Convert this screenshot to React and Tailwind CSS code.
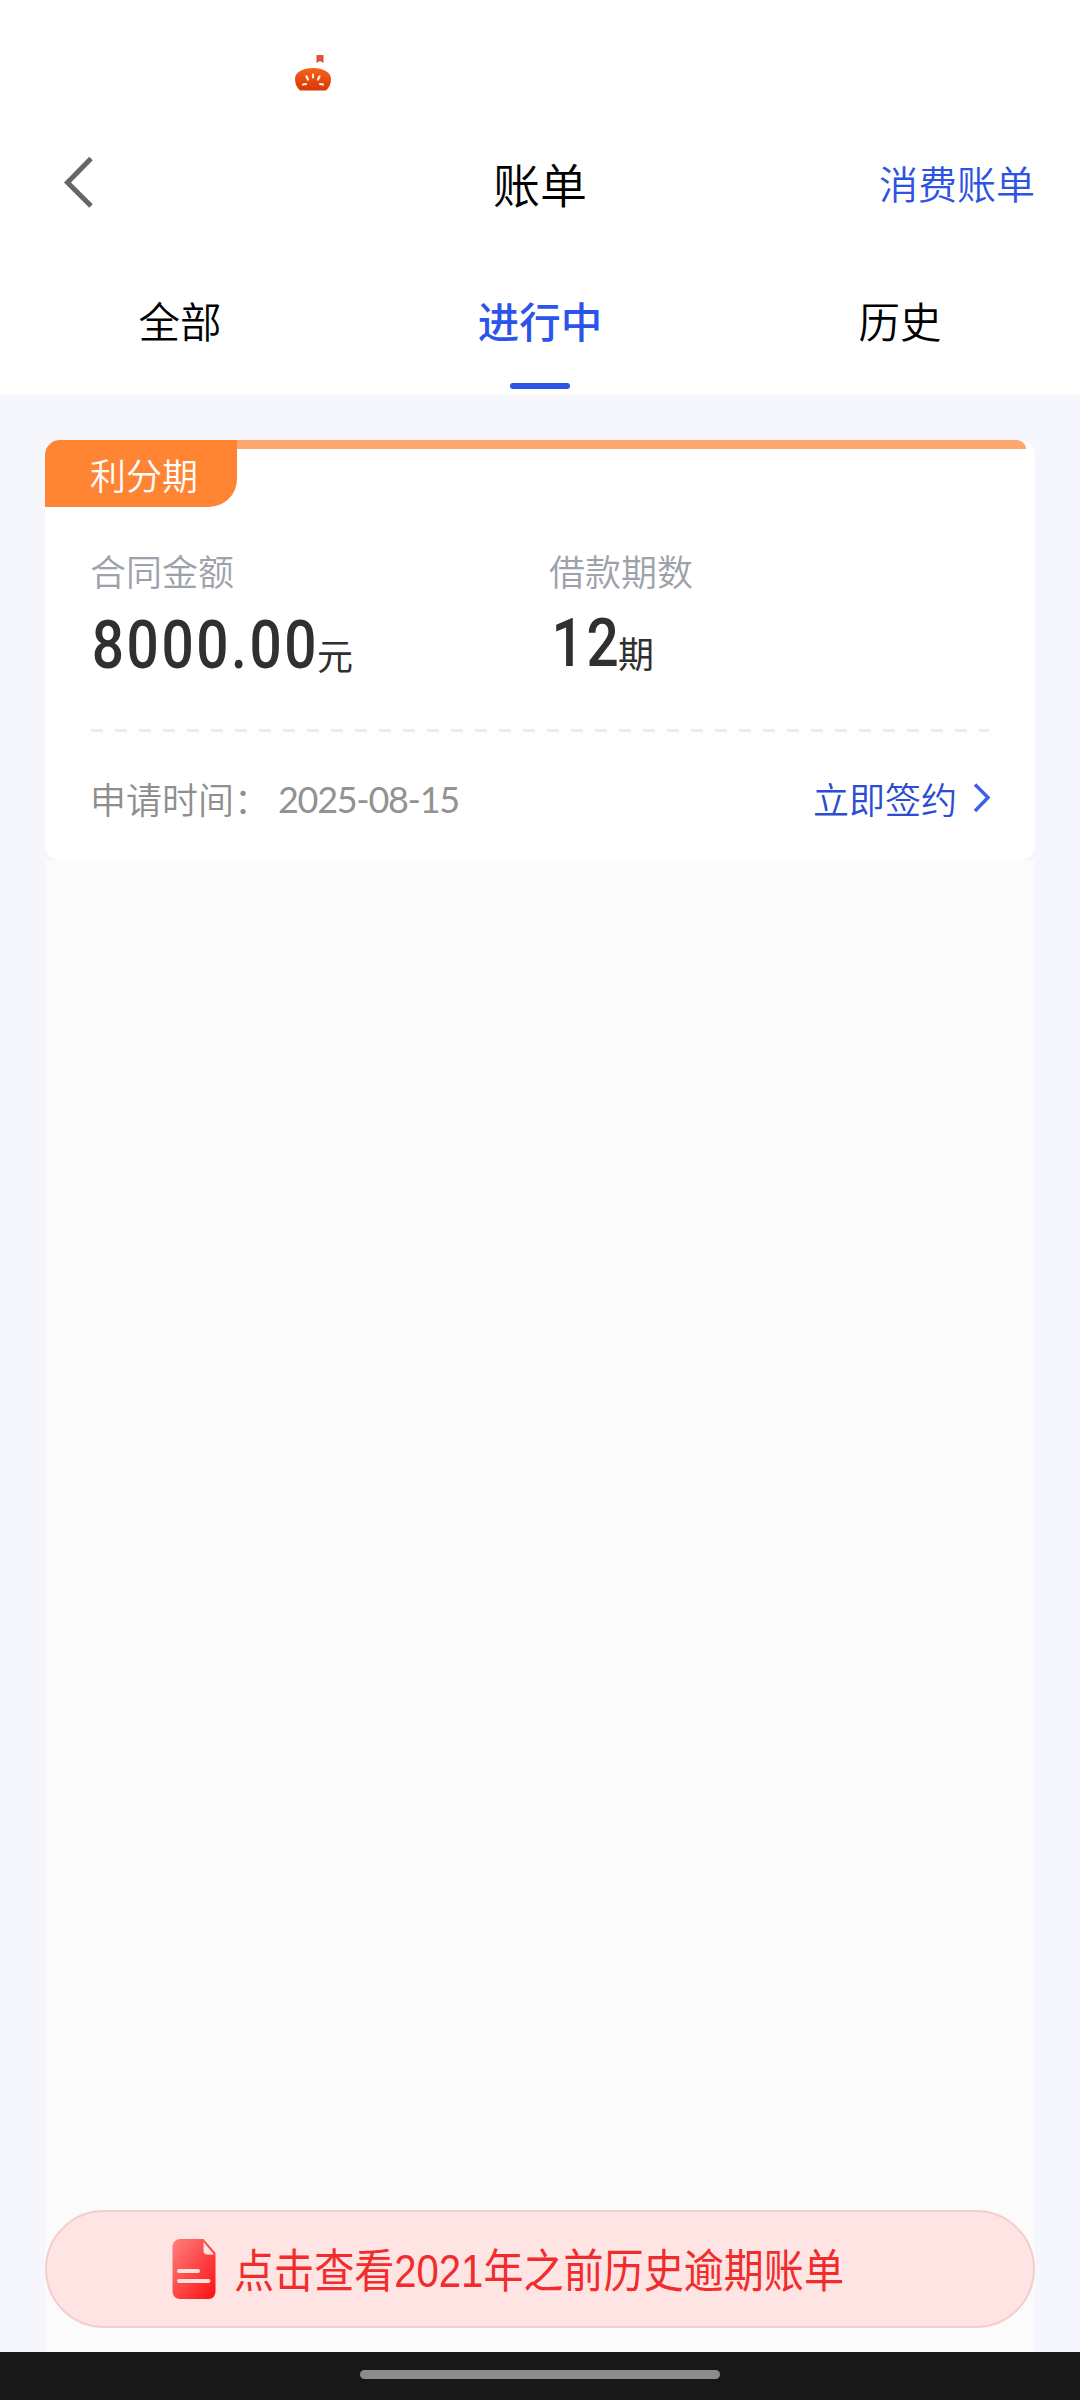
const tabs = [
  { key: "all", label: "全部" },
  { key: "doing", label: "进行中" },
  { key: "history", label: "历史" },
];

const bill = {
  tag: "利分期",
  amount: "8000.00",
  periods: "12",
  date: "2025-08-15",
};

function StatusIcon() {
  return (
    <svg width="38" height="38" viewBox="0 0 38 38">
      <defs>
        <linearGradient id="pumpkin" x1="0" y1="0" x2="0" y2="1">
          <stop offset="0" stopColor="#f2641c" />
          <stop offset="1" stopColor="#dc3606" />
        </linearGradient>
      </defs>
      <path d="M22.500 0h7v8l-3.500-2-3.500 2z" fill="#df5233" />
      <path
        d="M1 24c0-7 8-11 18-11s18 4 18 11c0 5-2 9-5 11.500H6C3 33 1 29 1 24z"
        fill="url(#pumpkin)"
      />
      <g stroke="#fff3dc" strokeWidth="2.200" strokeLinecap="round">
        <path d="M19 19.500v3M12.500 21.500l1.500 3M25.500 21.500l-1.500 3M9 29.500l3-.5M29 29.500l-3-.5" />
      </g>
    </svg>
  );
}

function BillIcon() {
  return (
    <svg width="44" height="62" viewBox="0 0 44 62">
      <defs>
        <linearGradient id="doc" x1="0" y1="0" x2="1" y2="1">
          <stop offset="0" stopColor="#ff7f7f" />
          <stop offset="1" stopColor="#fb1010" />
        </linearGradient>
      </defs>
      <path
        d="M8 1h23.500L43.500 15v38c0 5-3 8-7 8H8c-4 0-7.500-3-7.500-8V9c0-5 3.500-8 7.500-8z"
        fill="url(#doc)"
      />
      <path d="M31.500 4v8.500c0 2.500 1.500 4 4 4h6.500z" fill="#ffe4e4" />
      <path
        d="M7 33h19M7 43h29.500"
        stroke="#ffe0e0"
        strokeWidth="4"
        strokeLinecap="round"
      />
    </svg>
  );
}

function Header() {
  return (
    <div className="h-[130px] flex items-start pt-[55px] pl-[294px]">
      <StatusIcon />
    </div>
  );
}

function NavBar() {
  return (
    <div className="h-[103px] mb-[5px] grid grid-cols-3 items-center pl-[64px] pr-[45px]">
      <svg
        width="30"
        height="54"
        viewBox="0 0 30 54"
        fill="none"
        stroke="#666"
        strokeWidth="5"
      >
        <path d="M27 3.500 3.500 27.500 27 51" />
      </svg>
      <h1 className="pt-[2px] text-[47px] leading-[60px] text-center -ml-[19px] text-black font-[350]">
        账单
      </h1>
      <a className="pt-px text-[39px] leading-[60px] text-right text-[#2d53e2] font-[350]">
        消费账单
      </a>
    </div>
  );
}

function Tabs({ active }) {
  return (
    <div className="h-[157px] grid grid-cols-3">
      {tabs.map((tab) => (
        <div key={tab.key} className="flex flex-col items-center pt-[52px]">
          <span
            className={
              tab.key === active
                ? "text-[41.5px] leading-[60px] font-medium text-[#2b54ea]"
                : "text-[41.5px] leading-[60px] font-[350] text-black"
            }
          >
            {tab.label}
          </span>
          {tab.key === active && (
            <span className="mt-[33px] w-[60px] h-[6px] rounded-full bg-[#2b54ea]" />
          )}
        </div>
      ))}
    </div>
  );
}

function BillCard() {
  return (
    <div className="h-[420px] bg-white rounded-[15px]">
      {/* tag + top strip */}
      <div className="flex items-start pr-[9px]">
        <div className="w-[192px] h-[67px] pl-[45px] bg-[#ff8434] rounded-tl-[15px] rounded-br-[28px] text-white text-[36px] leading-[69px] font-[350]">
          {bill.tag}
        </div>
        <div className="flex-1 h-[9px] bg-[#fda76f] rounded-tr-[9px]" />
      </div>

      <div className="grid grid-cols-[459px_1fr] pl-[45px] pt-[38px]">
        <div>
          <p className="text-[36px] leading-[50px] text-[#9da2aa] font-[350]">
            合同金额
          </p>
          <div className="flex items-end h-[86px] text-[#303030]">
            <span className="w-[227px] h-[86px] pl-[2px] leading-[101px] font-[Roboto] font-medium text-[66px] tracking-[3px] origin-left scale-x-[0.86] whitespace-nowrap">
              {bill.amount}
            </span>
            <span className="text-[36px] leading-[54px]">元</span>
          </div>
        </div>
        <div>
          <p className="text-[36px] leading-[50px] text-[#9da2aa] font-[350]">
            借款期数
          </p>
          <div className="flex items-end h-[84px] text-[#303030]">
            <span className="w-[69px] h-[84px] pl-[3px] leading-[97px] font-[Roboto] font-medium text-[66px] tracking-[3px] origin-left scale-x-[0.86] whitespace-nowrap">
              {bill.periods}
            </span>
            <span className="text-[36px] leading-[54px]">期</span>
          </div>
        </div>
      </div>

      <div className="mt-[48px] mx-[46px] h-[3px] bg-[repeating-linear-gradient(90deg,#ececec_0_12px,transparent_12px_24px)]" />

      <div className="flex items-center mt-[37px] pl-[45px] pr-[44px] text-[36px] leading-[56px] font-[350]">
        <span className="text-[#8e8e8e]">申请时间：</span>
        <span className="ml-[8px] pt-[2px] flex-1 text-[#929292] font-[Lato] font-normal tracking-[-1.3px]">
          {bill.date}
        </span>
        <span className="text-[#2a4dd4]">立即签约</span>
        <svg
          width="18"
          height="30"
          viewBox="0 0 18 30"
          fill="none"
          stroke="#3b62e8"
          strokeWidth="3.500"
          className="ml-[16px]"
        >
          <path d="M2 1.500 15 14.500 2 28" />
        </svg>
      </div>
    </div>
  );
}

export default function App() {
  return (
    <div className="w-[1080px] h-[2400px] flex flex-col overflow-hidden bg-[#f5f7fd] font-['Noto_Sans_CJK_SC',sans-serif]">
      <div className="bg-white">
        <Header />
        <NavBar />
        <Tabs active="doing" />
      </div>

      <div className="flex-1 flex flex-col mx-[45px] mt-[45px]">
        <BillCard />
        <div className="flex-1 flex flex-col justify-end bg-[#fbfbfb] pb-[24px]">
          <button className="flex items-center h-[118px] pl-[125px] rounded-full border-2 border-[#f6cccc] bg-[#ffe4e4]">
            <BillIcon />
            <span className="ml-[18px] pt-[4px] font-['Liberation_Sans','Noto_Sans_CJK_SC',sans-serif] text-[46px] leading-[60px] text-[#f02c2c] origin-left scale-x-[0.871] whitespace-nowrap">
              点击查看2021年之前历史逾期账单
            </span>
          </button>
        </div>
      </div>

      {/* gesture bar */}
      <div className="h-[48px] bg-[#181818] flex justify-center items-start pt-[18px]">
        <div className="w-[360px] h-[9px] rounded-full bg-[#8b8b8b]" />
      </div>
    </div>
  );
}
